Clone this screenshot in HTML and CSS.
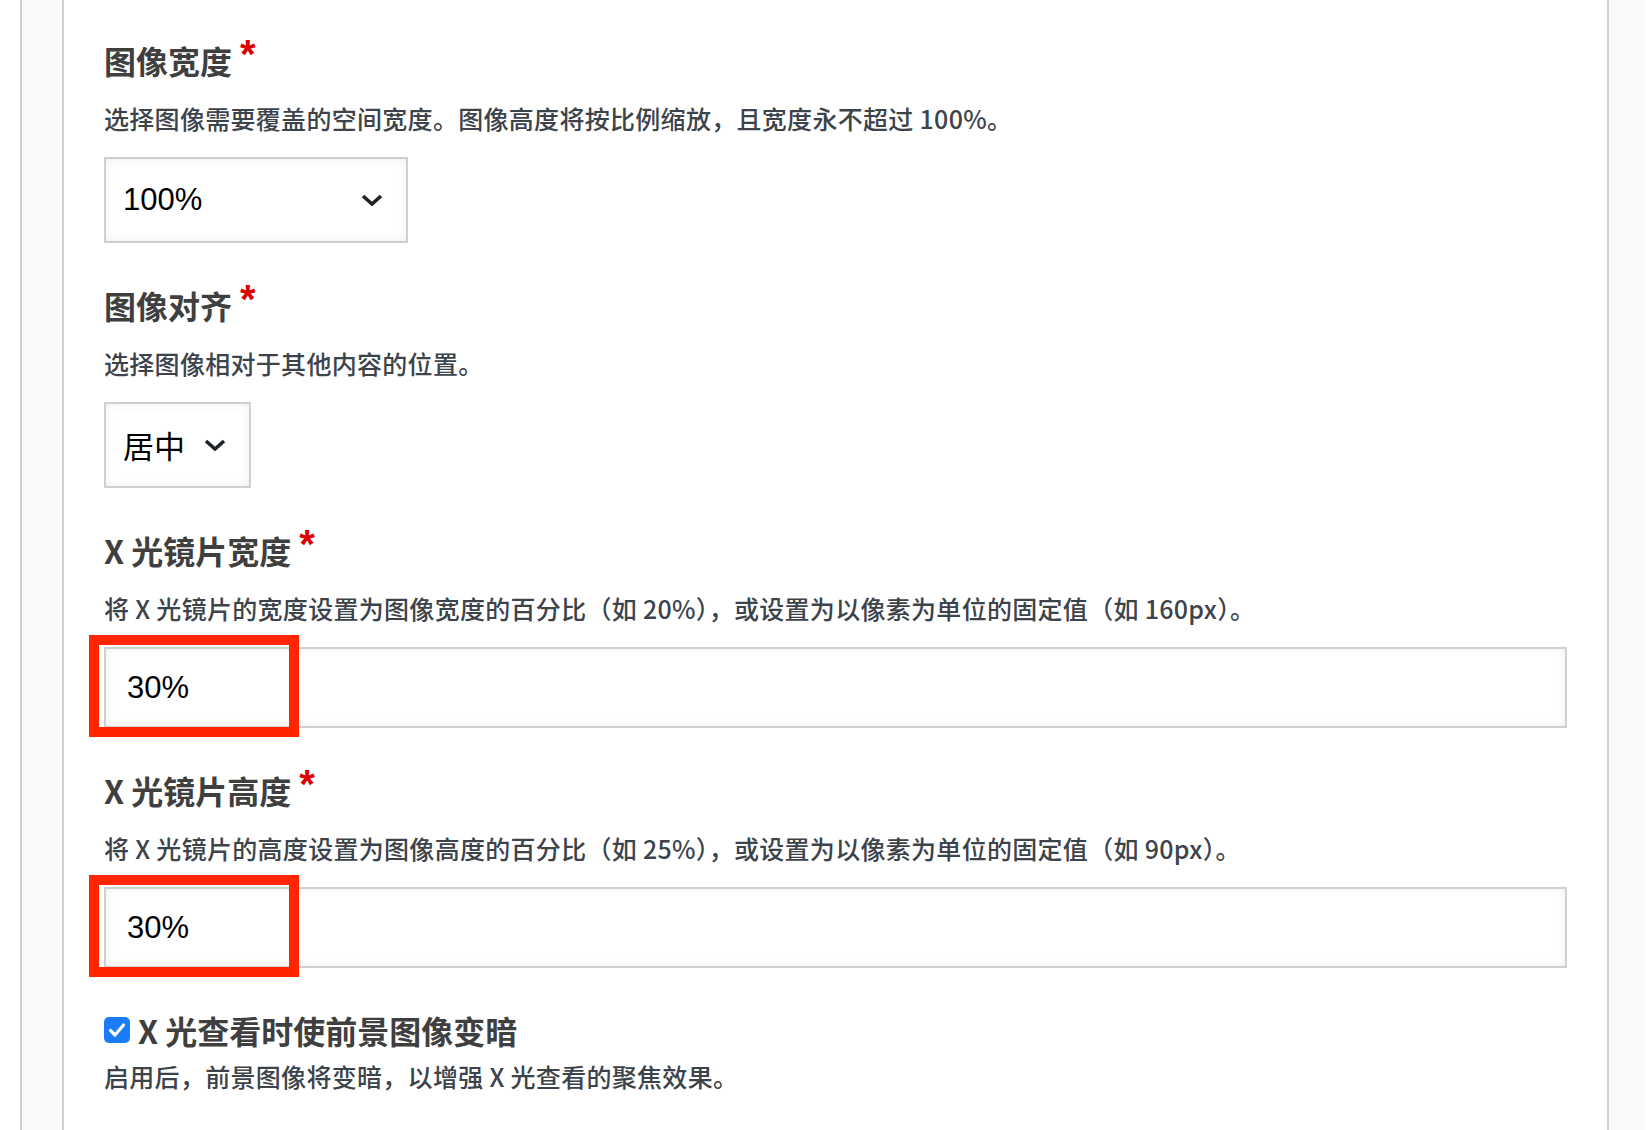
FILE: index.html
```html
<!DOCTYPE html>
<html lang="zh-CN">
<head>
<meta charset="utf-8">
<title>设置</title>
<link rel="stylesheet" href="styles.css">
</head>
<body>
<div class="frame">
  <div class="panel">
    <div class="field">
      <div class="label">图像宽度<span class="req">*</span></div>
      <div class="desc">选择图像需要覆盖的空间宽度。图像高度将按比例缩放，且宽度永不超过 100%。</div>
      <div class="select select-wide">
        <span class="select-value">100%</span>
        <svg class="chev" width="22" height="12" viewBox="0 0 22 12"><polyline points="2,2 11,10 20,2" fill="none" stroke="#1d2327" stroke-width="3.6" stroke-linejoin="miter"/></svg>
      </div>
    </div>
    <div class="field">
      <div class="label">图像对齐<span class="req">*</span></div>
      <div class="desc">选择图像相对于其他内容的位置。</div>
      <div class="select">
        <span class="select-value">居中</span>
        <svg class="chev" width="22" height="12" viewBox="0 0 22 12"><polyline points="2,2 11,10 20,2" fill="none" stroke="#1d2327" stroke-width="3.6" stroke-linejoin="miter"/></svg>
      </div>
    </div>
    <div class="field">
      <div class="label">X 光镜片宽度<span class="req">*</span></div>
      <div class="desc">将 X 光镜片的宽度设置为图像宽度的百分比（如 20%），或设置为以像素为单位的固定值（如 160px）。</div>
      <div class="input-wrap">
        <div class="input">30%</div>
        <div class="highlight"></div>
      </div>
    </div>
    <div class="field">
      <div class="label">X 光镜片高度<span class="req">*</span></div>
      <div class="desc">将 X 光镜片的高度设置为图像高度的百分比（如 25%），或设置为以像素为单位的固定值（如 90px）。</div>
      <div class="input-wrap">
        <div class="input">30%</div>
        <div class="highlight"></div>
      </div>
    </div>
    <div class="field field-check">
      <div class="check-row">
        <span class="checkbox">
          <svg width="18" height="16" viewBox="0 0 18 16"><polyline points="2.5,8.5 7,13 15.5,3" fill="none" stroke="#fff" stroke-width="3.2" stroke-linecap="round" stroke-linejoin="round"/></svg>
        </span>
        <span class="label check-label">X 光查看时使前景图像变暗</span>
      </div>
      <div class="desc desc-check">启用后，前景图像将变暗，以增强 X 光查看的聚焦效果。</div>
    </div>
  </div>
</div>
</body>
</html>
```
FILE: styles.css
```css
html, body {
  margin: 0;
  padding: 0;
  background: #ffffff;
}

body {
  font-family: "Noto Sans CJK SC", "Noto Sans", sans-serif;
  overflow: hidden;
}

.frame {
  box-sizing: border-box;
  margin-left: 20px;
  width: 1625px;
  min-height: 1130px;
  background: #fafafa;
  border-left: 2px solid #d0d0d0;
  padding: 0 36px 0 40px;
  display: flex;
}

.panel {
  box-sizing: border-box;
  flex: 1;
  background: #ffffff;
  border-left: 2px solid #d0d0d0;
  border-right: 2px solid #d0d0d0;
  padding: 40px 40px 0 40px;
  display: flex;
  flex-direction: column;
}

.field {
  margin-bottom: 42px;
}

.label {
  font-size: 32px;
  line-height: 40px;
  font-weight: 700;
  color: #3f3f3f;
  margin-bottom: 20px;
}

.req {
  font-family: "Liberation Sans", Arial, sans-serif;
  font-size: 40px;
  line-height: 0;
  font-weight: 700;
  color: #dd0000;
  margin-left: 8px;
  position: relative;
  top: -6px;
}

.desc {
  font-size: 25px;
  line-height: 36px;
  font-weight: 500;
  letter-spacing: 0.3px;
  color: #3c434a;
  margin-bottom: 21px;
}

.select {
  box-sizing: border-box;
  display: inline-flex;
  align-items: center;
  gap: 19px;
  height: 86px;
  padding: 0 23px 0 17px;
  border: 2px solid #d0d0d0;
  background: #ffffff;
  box-shadow: inset 0 0 10px rgba(0, 0, 0, 0.07);
  vertical-align: top;
}

.select-wide {
  width: 304px;
  justify-content: space-between;
}

.select-value {
  font-size: 31px;
  line-height: 40px;
  color: #000000;
}

.select-wide .select-value {
  font-family: "Liberation Sans", Arial, sans-serif;
}

.chev {
  display: block;
  flex: none;
}

.input-wrap {
  position: relative;
}

.input {
  box-sizing: border-box;
  height: 81px;
  width: 100%;
  border: 2px solid #d0d0d0;
  background: #ffffff;
  box-shadow: inset 0 0 10px rgba(0, 0, 0, 0.07);
  padding-left: 21px;
  display: flex;
  align-items: center;
  font-family: "Liberation Sans", Arial, sans-serif;
  font-size: 31px;
  color: #000000;
}

.highlight {
  position: absolute;
  left: -15px;
  top: -12px;
  width: 210px;
  height: 102px;
  box-sizing: border-box;
  border: 10px solid #ff2600;
  pointer-events: none;
}

.check-row {
  display: flex;
  align-items: center;
  gap: 8px;
}

.checkbox {
  width: 26px;
  height: 26px;
  border-radius: 5px;
  background: #1a7cf6;
  display: flex;
  align-items: center;
  justify-content: center;
  flex: none;
}

.check-label {
  margin-bottom: 0;
}

.desc-check {
  margin-top: 8px;
  margin-bottom: 0;
}
```
